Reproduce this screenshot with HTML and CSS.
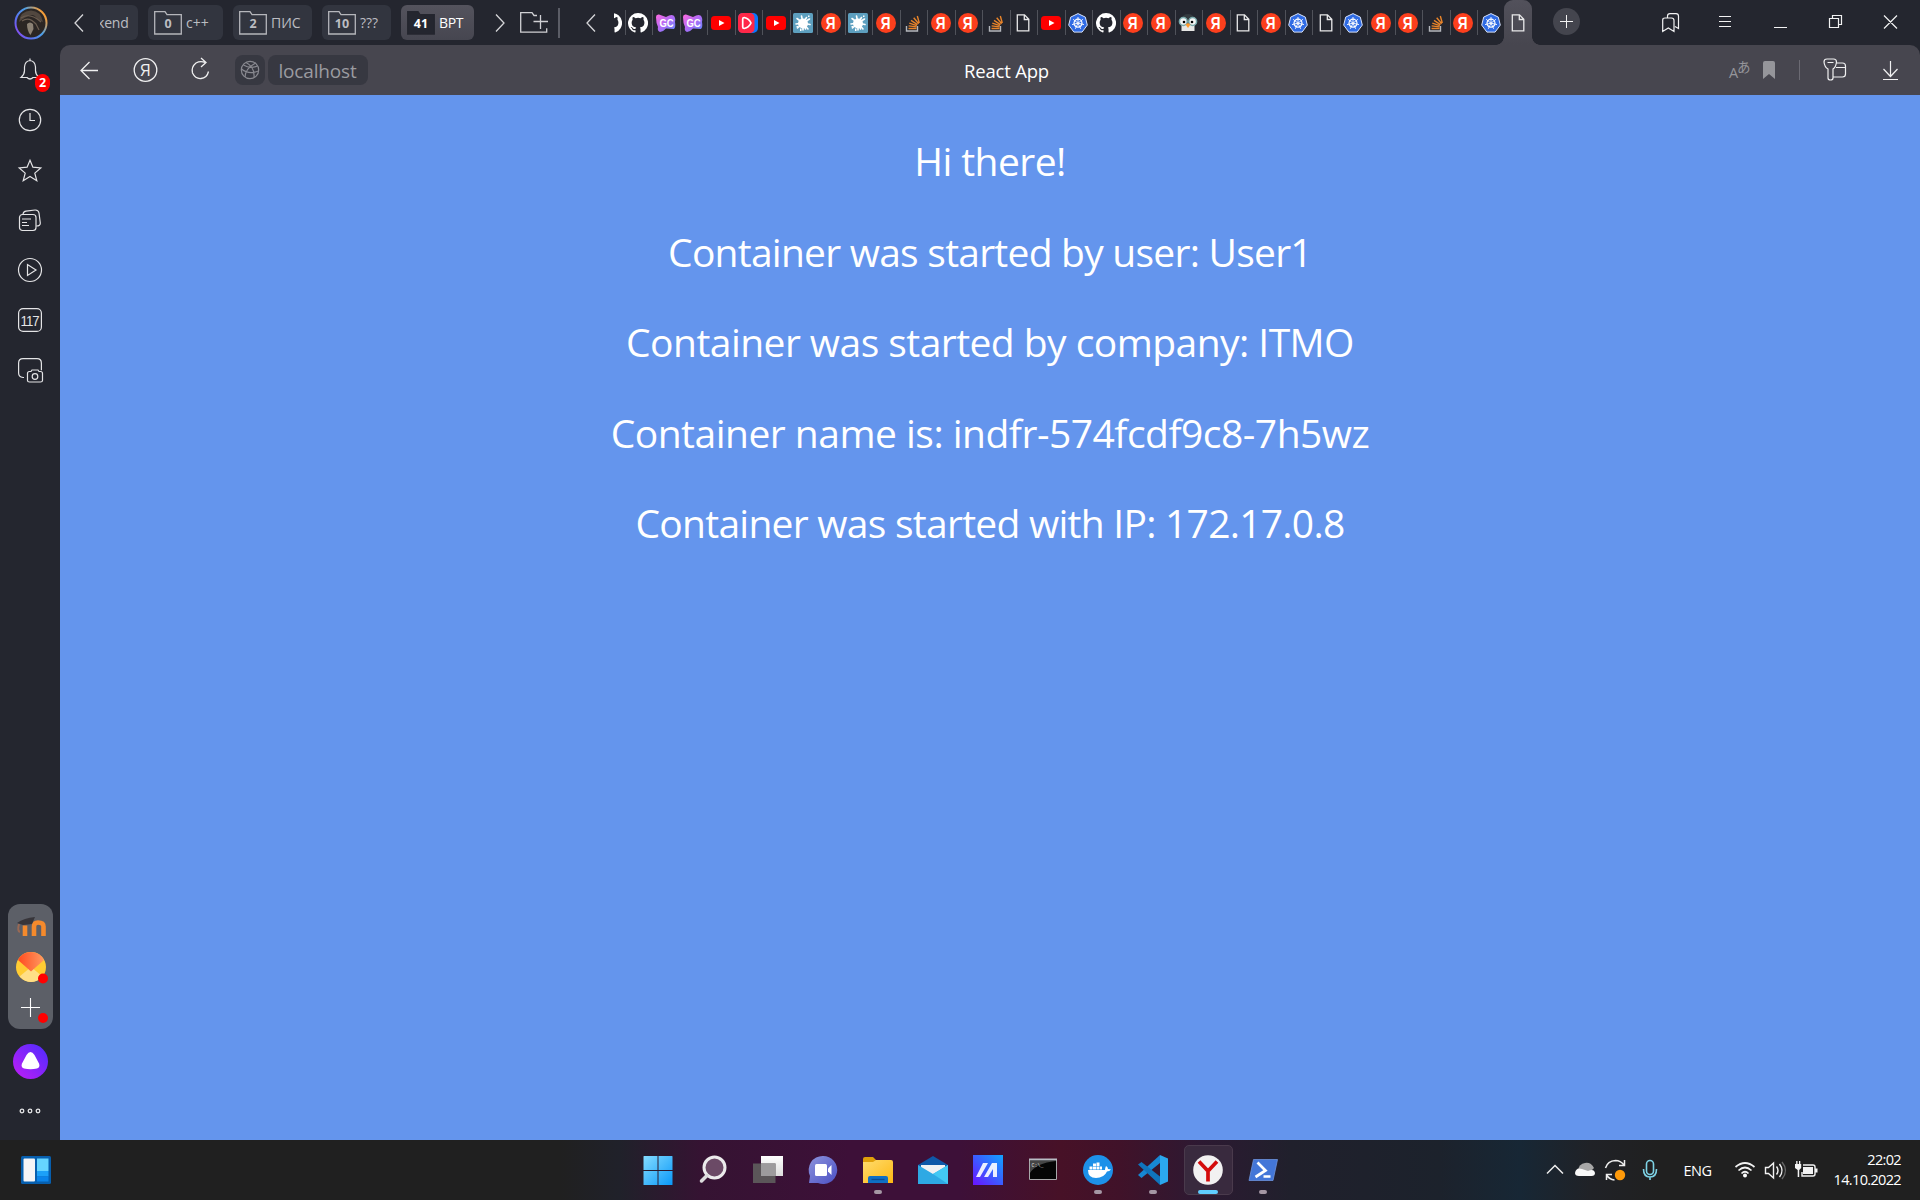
FILE: index.html
```html
<!DOCTYPE html>
<html lang="en">
<head>
<meta charset="utf-8">
<title>React App</title>
<link rel="stylesheet" href="styles.css">
</head>
<body>
<svg class="defs" width="0" height="0">
  <defs>
    <linearGradient id="gGc" x1="0" y1="0" x2="1" y2="1"><stop offset="0" stop-color="#ff6be0"/><stop offset=".5" stop-color="#b06af5"/><stop offset="1" stop-color="#5a8cff"/></linearGradient>
    <linearGradient id="gWin" x1="0" y1="0" x2="1" y2="1"><stop offset="0" stop-color="#84dcff"/><stop offset="1" stop-color="#0a98f8"/></linearGradient>
    <linearGradient id="gRing" x1="0" y1="1" x2="1" y2=".3"><stop offset="0" stop-color="#a03cf0"/><stop offset=".3" stop-color="#5c6cf0"/><stop offset=".65" stop-color="#4aa0e8"/><stop offset="1" stop-color="#ff9d2e"/></linearGradient>
    <linearGradient id="gFolder" x1="0" y1="0" x2="1" y2="1"><stop offset="0" stop-color="#ffdc6e"/><stop offset="1" stop-color="#fdb813"/></linearGradient>
    <linearGradient id="gAlice" x1="1" y1="0" x2="0" y2="1"><stop offset="0" stop-color="#4a2cff"/><stop offset="1" stop-color="#c31cf5"/></linearGradient>
    <linearGradient id="gChat" x1="0" y1="0" x2="1" y2="1"><stop offset="0" stop-color="#8c93dc"/><stop offset="1" stop-color="#4b50c4"/></linearGradient>
    <linearGradient id="gAsus" x1="1" y1="0" x2="0" y2="1"><stop offset="0" stop-color="#10a4ff"/><stop offset=".5" stop-color="#3b5cff"/><stop offset="1" stop-color="#6a12ff"/></linearGradient>
    <linearGradient id="gMail" x1="0" y1="0" x2="1" y2="0"><stop offset="0" stop-color="#ff4b1f"/><stop offset="1" stop-color="#ff9a62"/></linearGradient>
    <linearGradient id="gGlass" x1="0" y1="0" x2="0" y2="1"><stop offset="0" stop-color="#fff"/><stop offset="1" stop-color="#dcdcdc"/></linearGradient>
    <symbol id="github" viewBox="0 0 16 16"><path fill="#fff" d="M8 0a8 8 0 0 0-2.53 15.59c.4.07.55-.17.55-.38v-1.49c-2.01.37-2.53-.49-2.69-.94-.09-.23-.48-.94-.82-1.13-.28-.15-.68-.52-.01-.53.63-.01 1.08.58 1.23.82.72 1.21 1.87.87 2.33.66.07-.52.28-.87.51-1.07-1.78-.2-3.64-.89-3.64-3.95 0-.87.31-1.59.82-2.15-.08-.2-.36-1.02.08-2.12 0 0 .67-.21 2.2.82a7.4 7.4 0 0 1 4 0c1.53-1.04 2.2-.82 2.2-.82.44 1.1.16 1.92.08 2.12.51.56.82 1.27.82 2.15 0 3.07-1.87 3.75-3.65 3.95.29.25.54.73.54 1.48v2.2c0 .21.15.46.55.38A8 8 0 0 0 8 0z"/></symbol>
    <symbol id="gc" viewBox="0 0 20 20"><path fill="url(#gGc)" d="M0 4Q0 1 3 1.500L10 4Q15 1 17.500 2.500Q20 5 19 9Q20 14 18 16L10 15.500Q7 19 4 19Q1 18 2 14Q0 10 0 4z"/><text class="gc-text" transform="translate(10.500 14) scale(.9 1)">GC</text></symbol>
    <symbol id="yt" viewBox="0 0 20 20"><rect y="3" width="20" height="14" rx="3.500" fill="#f00"/><path fill="#fff" d="M8 7l5.500 3L8 13z"/></symbol>
    <symbol id="vid" viewBox="0 0 20 20"><rect width="20" height="20" rx="5" fill="#0a77ff"/><path fill="#ff2748" d="M5 0h8q3.500 1 3.500 5v10q0 4-3.500 5H5q-5 0-5-5V5q0-5 5-5z"/><path fill="none" stroke="#fff" stroke-width="1.700" stroke-linejoin="round" d="M4.700 6q0-1.500 1.500-1.500Q11 5.500 13 10q-2 4.500-6.800 5.500-1.500 0-1.500-1.500z"/></symbol>
    <symbol id="splat" viewBox="0 0 20 20"><rect width="20" height="20" rx="1.500" fill="#5d9fbf"/><circle cx="10" cy="10.500" r="5" fill="#fff"/><path stroke="#fff" stroke-width="1.600" stroke-linecap="round" d="M10 10L8.500 3M10 10l3.500-5.500M10 10L4 5.500M10 10l6.500-4M10 10l-7 1M10 10l7 1.500M10 10l-5.500 5M10 10l5 6M10 10v7M10 10l2.500 6"/><path fill="#fff" d="M15 2.500h1.500V4H15zM3.500 13H5v1.500H3.500zM7 15.500h1.500V18H7z"/></symbol>
    <symbol id="ya" viewBox="0 0 20 20"><circle cx="10" cy="10" r="10" fill="#fc3f1d"/><text class="ya-text" transform="translate(9.700 15.800) scale(.82 1)">Я</text></symbol>
    <symbol id="so" viewBox="0 0 20 20"><g fill="none" stroke-width="1.400"><path stroke="#b5b8bd" d="M3.500 13v5h11v-5"/><path stroke="#e8842a" d="M5.500 15.500h8M5.600 12.900l8 1M6.300 10.200l7.500 2.500M8 7.300l6.500 4.400M10.700 4.800l5 6M14.300 3l2 7"/></g></symbol>
    <symbol id="doc" viewBox="0 0 20 20"><path fill="none" stroke="#e9e9ea" stroke-width="1.300" d="M4.300 1.800h7.200l4.300 4.500v11.500H4.300zM11.300 1.800v4.700h4.500"/></symbol>
    <symbol id="k8s" viewBox="0 0 20 20"><path fill="#2f6be4" stroke="#d9e3f8" stroke-width="1" stroke-linejoin="round" d="M10 .6l7.300 3.500 2 8-5.200 7H5.900l-5.200-7 2-8z"/><g fill="none" stroke="#fff" stroke-width=".9"><circle cx="10" cy="10.200" r="4" stroke-width="1.200"/><path d="M10 10.200V4M10 10.200l4.900-3.900M10 10.200l6 1.400M10 10.200l2.700 5.600M10 10.200l-2.700 5.600M10 10.200l-6 1.400M10 10.200L5.100 6.300"/></g></symbol>
    <symbol id="peng" viewBox="0 0 20 20"><path fill="#343b40" d="M3 10Q3 1 10 1T17 10z"/><path fill="#e6e6e4" d="M3.500 11h13v7h-13z"/><g fill="#f5f5f5" stroke="#79a9ab" stroke-width="1.500"><circle cx="5.300" cy="8.500" r="3.900"/><circle cx="14.700" cy="8.500" r="3.900"/></g><circle cx="6" cy="9" r="1.300"/><circle cx="14" cy="9" r="1.300"/><path fill="#ff9a2e" d="M7.500 11.500L10 10l2.500 1.500L10 15z"/></symbol>
    <symbol id="folder" viewBox="0 0 28 24"><path d="M.7 23V.7H11L13 3.700H27.300V23z"/></symbol>
  </defs>
</svg>

<div class="browser">
  <header class="titlebar">
    <svg class="avatar" viewBox="0 0 34 34"><circle cx="17" cy="17" r="15.500" fill="#2b2624" stroke="url(#gRing)" stroke-width="2"/><path fill="#51473f" d="M5 16Q6 5 17 4.500 27 5 29 16l-6-3q-2-4-5-4-6 1-13 7z"/><path fill="none" stroke="#6b5d51" stroke-width="1.200" d="M7 12q9-6 20 4M8 15q7-5 14 3l3 6"/><path fill="#8b8174" d="M13 18q3-3 6 0l.500 5-3 6q-3.500-4-3.500-11z"/></svg>
    <svg class="chev chev-a" viewBox="0 0 10 18"><path d="M9 .5L1 9l8 8.500"/></svg>
    <div class="group group-cut">kend</div>
    <div class="group g-cpp"><span class="count"><svg class="folder"><use href="#folder"/></svg><b>0</b></span>c++</div>
    <div class="group g-pis"><span class="count"><svg class="folder"><use href="#folder"/></svg><b>2</b></span>ПИС</div>
    <div class="group g-que"><span class="count"><svg class="folder"><use href="#folder"/></svg><b>10</b></span>???</div>
    <div class="group g-bpt"><span class="count"><svg class="folder"><use href="#folder"/></svg><b>41</b></span>ВРТ</div>
    <svg class="chev chev-b" viewBox="0 0 10 18"><path d="M1 .5L9 9l-8 8.500"/></svg>
    <svg class="addfolder" viewBox="0 0 28 22"><path d="M17 3.500h-3L12 .7H.7v19.500h26v-4M20.500 3v14M13.500 9.500H28"/></svg>
    <i class="bar"></i>
    <svg class="chev chev-c" viewBox="0 0 10 18"><path d="M9 .5L1 9l8 8.500"/></svg>
    <nav class="tabs">
      <span class="tab tab-part"><svg><use href="#github"/></svg></span>
      <span class="tab"><svg><use href="#github"/></svg></span>
      <span class="tab"><svg><use href="#gc"/></svg></span>
      <span class="tab"><svg><use href="#gc"/></svg></span>
      <span class="tab"><svg><use href="#yt"/></svg></span>
      <span class="tab"><svg><use href="#vid"/></svg></span>
      <span class="tab"><svg><use href="#yt"/></svg></span>
      <span class="tab"><svg><use href="#splat"/></svg></span>
      <span class="tab"><svg><use href="#ya"/></svg></span>
      <span class="tab"><svg><use href="#splat"/></svg></span>
      <span class="tab"><svg><use href="#ya"/></svg></span>
      <span class="tab"><svg><use href="#so"/></svg></span>
      <span class="tab"><svg><use href="#ya"/></svg></span>
      <span class="tab"><svg><use href="#ya"/></svg></span>
      <span class="tab"><svg><use href="#so"/></svg></span>
      <span class="tab"><svg><use href="#doc"/></svg></span>
      <span class="tab"><svg><use href="#yt"/></svg></span>
      <span class="tab"><svg><use href="#k8s"/></svg></span>
      <span class="tab"><svg><use href="#github"/></svg></span>
      <span class="tab"><svg><use href="#ya"/></svg></span>
      <span class="tab"><svg><use href="#ya"/></svg></span>
      <span class="tab"><svg><use href="#peng"/></svg></span>
      <span class="tab"><svg><use href="#ya"/></svg></span>
      <span class="tab"><svg><use href="#doc"/></svg></span>
      <span class="tab"><svg><use href="#ya"/></svg></span>
      <span class="tab"><svg><use href="#k8s"/></svg></span>
      <span class="tab"><svg><use href="#doc"/></svg></span>
      <span class="tab"><svg><use href="#k8s"/></svg></span>
      <span class="tab"><svg><use href="#ya"/></svg></span>
      <span class="tab"><svg><use href="#ya"/></svg></span>
      <span class="tab"><svg><use href="#so"/></svg></span>
      <span class="tab"><svg><use href="#ya"/></svg></span>
      <span class="tab"><svg><use href="#k8s"/></svg></span>
      <span class="tab tab-active"><svg><use href="#doc"/></svg></span>
    </nav>
    <svg class="newtab" viewBox="0 0 27 27"><circle cx="13.500" cy="13.500" r="13.500" fill="#44454e"/><path stroke="#f2f2f2" d="M13.500 7v13M7 13.500h13"/></svg>
    <svg class="winbtns" viewBox="0 0 240 20"><g fill="none" stroke="#f2f2f3" stroke-width="1.200">
      <path d="M5.500 5V3q0-2.400 2.500-2.400h6q2.500 0 2.500 2.400v12.500l-3.500-2M.7 18.500V7Q.7 5 3 5h6.500q2.500 0 2.500 2.500v11L6.300 15z"/>
      <path d="M57 3.500h12M57 8.500h12M57 13.500h12M112 14.500h13M167.500 5.500h9v9h-9zM170.500 5V2.500h9v9h-2.500M222 2.500l13 13M235 2.500l-13 13"/></g></svg>
  </header>

  <div class="body">
    <aside class="side">
      <span class="cell bell"><svg viewBox="0 0 24 26"><path d="M3 20.500q3.500-3 3.500-7V10Q7 4 12 3.500 17 4 17.500 10v3.500q0 4 3.500 7h-6q-3 3-6 0zM12 3.500V1.500"/></svg><b class="badge">2</b></span>
      <span class="cell"><svg viewBox="0 0 24 24"><circle cx="12" cy="12" r="10.700"/><path d="M12 5v7.500h5"/></svg></span>
      <span class="cell"><svg viewBox="0 0 24 24"><path d="M12 2.200l2.900 7 7.900.7-6 5.200 2 7.700-6.800-4.300-6.800 4.300 2-7.700-6-5.200 7.900-.7z"/></svg></span>
      <span class="cell"><svg viewBox="0 0 24 24"><rect x="1.500" y="6.500" width="16.500" height="16" rx="3"/><path d="M4 11h9M4 14.500h5M4 17.500h7M5 6Q5.500 3.500 8 3.200l9-1.200q3.500-.2 4 3l1.300 10q.2 3-4 3"/></svg></span>
      <span class="cell"><svg viewBox="0 0 24 24"><circle cx="12" cy="12" r="11.500"/><path d="M9.500 6.500v11L18 12z"/></svg></span>
      <span class="cell"><svg viewBox="0 0 24 24"><rect x=".6" y=".6" width="22.800" height="22.800" rx="4.500"/><text class="cal" transform="translate(11.500 17.500) scale(.88 1)">117</text></svg></span>
      <span class="cell"><svg viewBox="0 0 24 24"><path d="M6 19.500H5Q.6 19 .6 15V5Q.6.700 5 .7h14q4.400 0 4.400 4.500v7M9.500 15.500q0-2 2-2h1.500l1-1.500h6l1 1.500h1.500q2 0 2 2v7q0 1.500-2 1.500h-11q-2 0-2-1.500z"/><circle cx="17" cy="18.500" r="2.800"/></svg></span>
      <div class="dock">
        <svg class="moodle" viewBox="0 0 32 22"><g fill="none" stroke="#f58a2c" stroke-width="4.600"><path d="M9 20V9.500M18 20V10.500q0-4 4-4 5.500 0 5.500 4V20"/></g><path fill="none" stroke="#9a6954" stroke-width="2" d="M3 8q-2 7 1 8"/><path fill="#37353a" d="M1 7q7-5 18-6l-3 7-9 1z"/></svg>
        <svg class="ymail" viewBox="0 0 36 32"><circle cx="15" cy="15" r="15" fill="#ffcc33"/><path fill="#ffdf86" d="M3.500 24.500L15 15l11.500 9.500Q21 30 15 30T3.500 24.500z"/><path fill="url(#gMail)" d="M2 8Q6 0 15 0t13 8L15 19.500z"/><circle cx="27" cy="26.500" r="5" fill="red"/></svg>
        <svg class="plus" viewBox="0 0 36 32"><path stroke="#fff" stroke-width="1.100" d="M14.500 5v19M5 14.500h19"/><circle cx="27" cy="25" r="5" fill="red"/></svg>
      </div>
      <svg class="alice" viewBox="0 0 35 35"><circle cx="17.500" cy="17.500" r="17.500" fill="url(#gAlice)"/><path fill="#fff" d="M17.500 8q2 0 4 3l4.500 8.500q1.500 3.500-2 5-6.500 1.500-13 0-3.500-1.500-2-5L13.500 11q2-3 4-3z"/></svg>
      <svg class="more" viewBox="0 0 22 6"><g fill="none" stroke="#e5e5e7" stroke-width="1.300"><circle cx="3" cy="3" r="1.800"/><circle cx="11" cy="3" r="1.800"/><circle cx="19" cy="3" r="1.800"/></g></svg>
    </aside>

    <div class="view">
      <div class="toolbar">
        <svg class="t-nav" viewBox="0 0 140 26"><g fill="none" stroke="#f0f0f1" stroke-width="1.300"><path d="M18 13.500H1M9.500 5L1 13.500l8.500 8.500"/><circle cx="65.500" cy="13" r="11.300"/><path d="M125 5.500q-4.500-2-9 .5-5 4-3.500 10 3 6 8.500 5.500 6-.5 7.500-7M121 1l5 4.500-5 4.500"/></g><text class="ya-nav" transform="translate(65.200 19) scale(.85 1)">Я</text></svg>
        <div class="globe"><svg viewBox="0 0 20 20"><circle cx="10" cy="10" r="8.700"/><path d="M6 2.500Q15 7 14 17.500M15.500 3Q5 9 5 17M1.500 9Q9 15 18.500 11M3.500 5Q10 9 17.500 6"/></svg></div>
        <div class="url">localhost</div>
        <div class="title">React App</div>
        <svg class="t-right" viewBox="0 0 180 26"><text class="tr-a" x="0" y="20.500">A</text><text class="tr-b" x="8" y="14.500">あ</text><path fill="#95959a" d="M34 6q0-2 2-2h8q2 0 2 2v16l-6-5-6 5z"/><path stroke="#6b6a73" d="M70.500 3v20"/><g fill="none" stroke="#f0f0f1" stroke-width="1.200"><path d="M98 2h6.500q3 0 3 3-.5 5-3.500 7v9q0 2-2.500 2T99 21v-9q-3.500-2-4-7 0-3 3-3zM98.500 5.500h6M107.500 6h6q3 0 3 3v8q0 3-3 3h-9M107 10.500h9.500"/><path d="M161.500 4v15M154.500 12l7 7.500 7-7.500M154 22.500h15"/></g></svg>
      </div>
      <main class="page">
        <p class="l1">Hi there!</p>
        <p class="l2">Container was started by user: User1</p>
        <p class="l3">Container was started by company: ITMO</p>
        <p class="l4">Container name is: indfr-574fcdf9c8-7h5wz</p>
        <p class="l5">Container was started with IP: 172.17.0.8</p>
      </main>
    </div>
  </div>
</div>

<footer class="taskbar">
  <svg class="widgets" viewBox="0 0 30 28"><rect width="30" height="28" rx="1.500" fill="#075fae"/><path fill="#f4f4f6" d="M2.500 3.500q0-1 1-1h9.500q1 0 1 1v21q0 1-1 1H3.500q-1 0-1-1z"/><path fill="#66d4ff" d="M16 2.500h11.500V15H16z"/><path fill="#1ca1f8" d="M16 15h11.500v5.500H16z"/><path fill="#0a84ea" d="M16 20.500h11.500v5H16z"/></svg>
  <div class="apps">
    <span class="app"><svg viewBox="0 0 30 30"><path fill="url(#gWin)" d="M.5 1.500q0-.5.500-.5h13.500v14H.5zM15.500 1H29q.5 0 .5.500V15h-14zM.5 16h14v14H1q-.5 0-.5-.5zM15.500 16h14v13.500q0 .5-.5.500H15.500z"/></svg></span>
    <span class="app"><svg viewBox="0 0 30 30"><circle cx="16.500" cy="12.500" r="10.500" fill="#6b4a66" stroke="#ecebec" stroke-width="3"/><path stroke="#dcdcdc" stroke-width="3.500" stroke-linecap="round" d="M9 20.500l-5.500 5.500"/></svg></span>
    <span class="app"><svg viewBox="0 0 30 30"><path fill="url(#gGlass)" d="M8 1h22v20H8z"/><path fill="#5b5659" d="M0 8.500h22.500V28H0z"/><path fill="#9d9b9d" d="M8 8.500h14.500V21H8z"/></svg></span>
    <span class="app"><svg viewBox="0 0 30 30"><path fill="url(#gChat)" d="M15 1a14 14 0 1 1-5 27H1l1-7A14 14 0 0 1 15 1z"/><rect x="7" y="9" width="12" height="12" rx="1.500" fill="#fff"/><path fill="#fff" d="M20 13.500l3.500-3.500v10L20 16.500z"/></svg></span>
    <span class="app run"><svg viewBox="0 0 30 30"><path fill="#e0a00a" d="M0 4q0-2 2-2h8l3 3v5H0z"/><path fill="url(#gFolder)" d="M0 7h10l3-2h15q2 0 2 2v21H0z"/><path fill="#0f6fc4" d="M5 28v-5q0-2 2-2h16q2 0 2 2v5z"/><path stroke="#0a4c94" stroke-width="1.300" d="M8.500 24.500h13"/></svg></span>
    <span class="app"><svg viewBox="0 0 30 30"><path fill="#0f58a8" d="M0 10L15 1l15 9v6H0z"/><path fill="#f1f1f3" d="M3 10h24v7l-12 5-12-5z"/><path fill="#2ea9e4" d="M0 10l15 9 15-9v19H0z"/><path fill="#43c8f4" d="M30 10v19L15 19z"/></svg></span>
    <span class="app"><svg viewBox="0 0 30 30"><path fill="url(#gAsus)" d="M0 0h30v30H0z"/><path fill="#fff" opacity=".9" d="M3 22L10 8h5L7 22zM11 22l8-14h5v14h-4v-8l-5 8z"/></svg></span>
    <span class="app"><svg viewBox="0 0 30 30"><path fill="#050505" stroke="#a9a9ab" d="M1.500 4.500h27v20h-27z"/><path fill="#b9bcc5" d="M1 3.500h28v2H1z"/><path fill="#454545" d="M2 6h26Q8 8 2 18z"/><text class="cmd" x="3.500" y="11.500">C:\_</text></svg></span>
    <span class="app run"><svg viewBox="0 0 30 30"><circle cx="15" cy="15" r="15" fill="#1d91e9"/><path fill="#fff" d="M5 15h17q0-2 1-4 2 1 2 3 2 0 3 .5-1.500 2-4 2Q21 23 13 23q-8 0-8-8zM6.500 11.500h3v3h-3zM10 11.500h3v3h-3zM13.500 11.500h3v3h-3zM17 11.500h2v3h-2zM10 8.500h3v2.500h-3zM13.500 7.500h3v3.500h-3z"/></svg></span>
    <span class="app run"><svg viewBox="0 0 30 30"><path fill="#1787d3" d="M0 20l22-20v8L3.500 23z"/><path fill="#0f74bd" d="M0 9.500L3.500 7 22 21.500V30z"/><path fill="#2ba7ee" d="M22 0l8 3.500v23L22 30z"/></svg></span>
    <span class="app focus"><svg viewBox="0 0 30 30"><circle cx="15" cy="15" r="14.800" fill="#f2f1f1"/><path fill="none" stroke="#d40b0b" stroke-width="3.700" d="M6 6.500L15 16l9-9.500M15 15v11.500"/></svg></span>
    <span class="app run"><svg viewBox="0 0 30 30"><path fill="#4376d8" stroke="#6c92dc" stroke-width=".8" d="M5.500 4.500h24L25 25.500H1z"/><path fill="none" stroke="#fff" stroke-width="2.700" d="M9.500 7.500l8 8-10 6.500M15.500 21.500h7"/></svg></span>
  </div>
  <svg class="tray" viewBox="0 0 280 30">
    <g fill="none" stroke="#eee" stroke-width="1.500"><path d="M7 18.500l8-8 8 8"/><path d="M65.500 13q2-7 10-7.500 5 0 8.500 4.500M84.500 5v5.500H79M66.500 25v-5.500h5.500M66.500 20q3 4.500 8 5"/></g>
    <path fill="#a7a7a7" d="M38 15q1-6 7-7 6-1 9 5l-8 8z"/><path fill="#f8f8f8" d="M35 18q1-6 7-4l6 2q6-3 7 2 0 3-3.500 3H39q-4 0-4-3z"/>
    <circle cx="80" cy="20" r="5.200" fill="#ff9a0a"/>
    <g fill="none" stroke="#7ed3e6" stroke-width="1.600"><rect x="106.500" y="5.500" width="7" height="14" rx="3.500"/><path d="M103.500 14q0 8 6.500 8t6.500-8M110 22v3"/></g>
    <text class="eng" x="143.500" y="20.500">ENG</text>
    <g fill="none" stroke="#f2f2f2" stroke-width="1.700"><path d="M195.500 12q9.500-8 19 0M198.500 15.500q6.500-6 13 0M201.500 18.500q3.500-3.500 7 0"/><path stroke-width="1.400" d="M225.500 12.500h3l5-4.500v15l-5-4.500h-3zM236.500 11.500q3 4 0 8"/><path stroke-width="1.400" d="M239.500 9q5 6.500 0 13"/><path stroke="#666" stroke-width="1.400" d="M242 7q7 8.500 0 17"/><path stroke-width="1.400" d="M263 10h10q2 0 2 2v7q0 2-2 2h-11v-4"/></g>
    <circle cx="205" cy="20.500" r="2" fill="#fff"/><path fill="#f4f4f4" d="M263 12h10v7h-10zM275 13.500h2.500v4H275zM255 9h1.200V6h1.300v3h1.500V6h1.300v3h.9v4l-2 2v7h-1.500v-7l-2.700-2z"/>
  </svg>
  <div class="clock"><span class="time">22:02</span><span class="date">14.10.2022</span></div>
</footer>
</body>
</html>
```
FILE: styles.css
```css
* { box-sizing: border-box; }
body {
  margin: 0;
  width: 1920px;
  height: 1200px;
  overflow: hidden;
  display: flex;
  flex-direction: column;
  background: #24262f;
  font-family: "Open Sans", "Noto Sans", "Noto Sans CJK JP", sans-serif;
  color: #fff;
}
.defs { position: absolute; }
svg { display: block; flex: none; overflow: visible; }
.browser { height: 1140px; display: flex; flex-direction: column; }

/* title bar */
.titlebar { height: 45px; display: flex; align-items: center; flex: none; }
.avatar { width: 34px; height: 34px; margin-left: 14px; }
.chev { width: 10px; height: 18px; fill: none; stroke: #d5d5d8; stroke-width: 1.3; }
.chev-a { margin-left: 26px; }
.chev-b { margin-left: 21px; }
.chev-c { margin-left: 26px; }
.group {
  height: 35px;
  display: flex;
  align-items: center;
  border-radius: 6px;
  background: #32353f;
  color: #bcbdc2;
  font-size: 14px;
  padding-left: 6px;
  gap: 4px;
  white-space: nowrap;
  overflow: hidden;
  flex: none;
}
.group-cut { margin-left: 16px; width: 38px; padding-left: 0; border-radius: 0 6px 6px 0; text-indent: -3px; letter-spacing: -.2px; }
.g-cpp { margin-left: 10px; width: 75px; }
.g-pis { margin-left: 10px; width: 79px; }
.g-que { margin-left: 10px; width: 69px; }
.g-bpt { margin-left: 10px; width: 73px; background: linear-gradient(#54535d, #464650); color: #fff; letter-spacing: -.3px; }
.count { display: grid; width: 28px; height: 24px; align-items: center; justify-items: center; flex: none; }
.count > * { grid-area: 1 / 1; }
.count b { font-size: 12.5px; line-height: 18px; padding-top: 3px; letter-spacing: 0; }
.folder { width: 28px; height: 24px; fill: none; stroke: #b5b6bb; stroke-width: 1.3; }
.g-bpt .folder { fill: #24262f; stroke: #24262f; }
.addfolder { width: 28px; height: 22px; margin-left: 15px; fill: none; stroke: #d0d0d4; stroke-width: 1.3; }
.bar { width: 2px; height: 30px; margin-left: 10px; background: #5b5d66; }
.tabs { display: flex; height: 45px; margin-left: 18px; flex: none; }
.tab {
  width: 27.5px;
  display: flex;
  align-items: center;
  justify-content: center;
  padding-top: 1px;
  background: linear-gradient(#50525a, #50525a) 0 10px / 1px 25px no-repeat;
}
.tab svg { width: 20px; height: 20px; }
.tab-part { width: 10.5px; overflow: hidden; justify-content: flex-end; background: none; padding-right: 3px; }
.tab-active {
  position: relative;
  width: 28px;
  margin-left: -1px;
  border-radius: 9px 9px 0 0;
  background: linear-gradient(#52515b, #47464f);
}
.tab-active::before, .tab-active::after {
  content: "";
  position: absolute;
  bottom: 0;
  width: 8px;
  height: 8px;
}
.tab-active::before { left: -8px; background: radial-gradient(circle at 0 0, transparent 7.500px, #47464f 8px); }
.tab-active::after { right: -8px; background: radial-gradient(circle at 100% 0, transparent 7.500px, #47464f 8px); }
.newtab { width: 27px; height: 27px; margin: -2px 0 0 21px; }
.winbtns { width: 240px; height: 20px; margin-left: 82px; }
.gc-text { font: bold 10.5px "Liberation Sans", sans-serif; fill: #fff; text-anchor: middle; }
.ya-text { font: bold 16.5px "Liberation Sans", sans-serif; fill: #fff; text-anchor: middle; }

/* left rail */
.body { display: flex; flex: 1; }
.side { width: 60px; display: flex; flex-direction: column; align-items: center; }
.cell { height: 50px; width: 60px; display: flex; align-items: center; justify-content: center; flex: none; }
.cell svg { width: 24px; height: 24px; fill: none; stroke: #e4e4e6; stroke-width: 1.2; }
.cell .cal { font: 15px "Liberation Sans", sans-serif; fill: #e4e4e6; stroke: none; text-anchor: middle; letter-spacing: -1.2px; }
.bell { position: relative; }
.bell svg { height: 26px; }
.badge {
  position: absolute;
  left: 35px;
  top: 29px;
  width: 15px;
  height: 18px;
  border-radius: 8px;
  background: red;
  font-size: 12.5px;
  line-height: 18px;
  text-align: center;
}
.dock {
  width: 45px;
  height: 125px;
  margin: 509px 0 0 1px;
  border-radius: 12px;
  background: #5c5f67;
  display: flex;
  flex-direction: column;
  padding: 12px 0 0 8px;
}
.moodle { width: 32px; height: 22px; }
.ymail { width: 36px; height: 32px; margin-top: 14px; }
.plus { width: 36px; height: 32px; margin-top: 9px; }
.alice { width: 35px; height: 35px; margin: 15px 0 0 1px; }
.more { width: 22px; height: 6px; margin: 29px 0 0 0; }

/* page area */
.view { flex: 1; display: flex; flex-direction: column; }
.toolbar {
  height: 50px;
  display: flex;
  align-items: center;
  background: #47464f;
  border-radius: 10px 10px 0 0;
  color: #fff;
}
.t-nav { width: 140px; height: 26px; margin-left: 20px; }
.ya-nav { font: 17px "Liberation Sans", sans-serif; fill: #f0f0f1; text-anchor: middle; }
.globe, .url { height: 30px; border-radius: 8px; background: #373841; display: flex; align-items: center; justify-content: center; }
.globe { margin-left: 15px; width: 30px; }
.globe svg { width: 20px; height: 20px; fill: none; stroke: #898990; stroke-width: 1.2; }
.url { margin-left: 3px; width: 100px; font-size: 19px; letter-spacing: -.15px; color: #9b9ba0; padding: 1px 1px 0 0; }
.title { margin-left: 596px; width: 91px; font-size: 18.5px; letter-spacing: -.2px; white-space: nowrap; }
.t-right { width: 180px; height: 26px; margin-left: 674px; }
.tr-a { font-size: 14.5px; fill: #95959a; }
.tr-b { font: 13.5px "Noto Sans CJK JP", sans-serif; fill: #95959a; }
.page { flex: 1; background: #6495ed; display: flex; flex-direction: column; align-items: center; padding-top: 39px; }
.page p { margin: 0; height: 90.5px; line-height: 54px; font-size: 39px; white-space: nowrap; }
.page .l1 { letter-spacing: -.55px; }
.page .l2 { letter-spacing: -.76px; }
.page .l3 { letter-spacing: -.55px; }
.page .l4 { letter-spacing: -.51px; }
.page .l5 { letter-spacing: -.74px; }

/* taskbar */
.taskbar {
  height: 60px;
  display: flex;
  align-items: center;
  background: linear-gradient(90deg, #202020 0, #202020 560px, #20212a 620px, #351332 700px, #3d1038 850px, #3d1038 960px, #471127 1060px, #401229 1120px, #2d1932 1200px, #20202c 1290px, #1c222c 1440px, #172735 1520px, #202227 1590px, #202020 1660px);
}
.widgets { width: 30px; height: 28px; margin-left: 21px; }
.apps { display: flex; margin-left: 579.500px; }
.app { position: relative; width: 55px; height: 60px; display: flex; align-items: center; justify-content: center; }
.app svg { position: relative; width: 30px; height: 30px; }
.run::after, .focus::after {
  content: "";
  position: absolute;
  bottom: 6px;
  left: 23.500px;
  width: 8px;
  height: 4px;
  border-radius: 2px;
  background: #a597a4;
}
.focus::after { left: 17.500px; width: 20px; background: #60cdff; }
.focus::before {
  content: "";
  position: absolute;
  inset: 5px 3px;
  border: 1px solid #4a3a4c;
  border-radius: 5px;
  background: #392a3e;
}
.cmd { font: 5px "Liberation Mono", monospace; fill: #ddd; }
.tray { width: 280px; height: 30px; margin-left: 249.500px; }
.eng { font-size: 14.5px; fill: #fff; letter-spacing: -.5px; }
.clock { display: flex; flex-direction: column; align-items: flex-end; width: 81px; font-size: 14.5px; line-height: 20px; letter-spacing: -.65px; }
```
